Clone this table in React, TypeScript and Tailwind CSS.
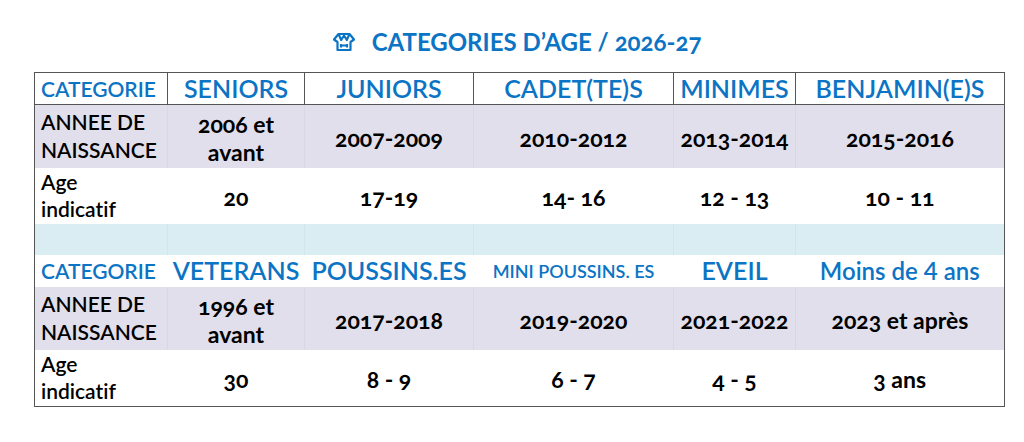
import React from "react";

const font = { fontFamily: "Lato, 'Open Sans', sans-serif" };

const widths = ["w-[133px]", "w-[137px]", "w-[169px]", "w-[200px]", "w-[122px]", "w-[209px]"];

type Block = {
  heads: { label: string; size: string }[];
  years: string[];
  ages: string[];
  bordered: boolean;
};

const blocks: Block[] = [
  {
    heads: [
      { label: "SENIORS", size: "text-[25px]" },
      { label: "JUNIORS", size: "text-[25px]" },
      { label: "CADET(TE)S", size: "text-[25px]" },
      { label: "MINIMES", size: "text-[25px]" },
      { label: "BENJAMIN(E)S", size: "text-[25px]" },
    ],
    years: ["2006 et\navant", "2007-2009", "2010-2012", "2013-2014", "2015-2016"],
    ages: ["20", "17-19", "14- 16", "12 - 13", "10 - 11"],
    bordered: true,
  },
  {
    heads: [
      { label: "VETERANS", size: "text-[25px]" },
      { label: "POUSSINS.ES", size: "text-[25px]" },
      { label: "MINI POUSSINS. ES", size: "text-[18px]" },
      { label: "EVEIL", size: "text-[25px]" },
      { label: "Moins de 4 ans", size: "text-[24px]" },
    ],
    years: ["1996 et\navant", "2017-2018", "2019-2020", "2021-2022", "2023 et après"],
    ages: ["30", "8 - 9", "6 - 7", "4 - 5", "3 ans"],
    bordered: false,
  },
];

function Logo() {
  return (
    <svg width="22" height="20" viewBox="0 0 22 20" fill="none" stroke="#0b74c4" strokeWidth="2.2" strokeLinejoin="round">
      <path d="M5.5 2 L16.5 2 L21 7.5 L17.5 10 L17.5 18 L4.5 18 L4.5 10 L1 7.5 Z" />
      <path d="M5.5 2 L8.2 8 L11 3.5 L13.8 8 L16.5 2" />
      <path d="M8 12 L8 15.5 M14 12 L14 15.5 M8 13.5 L14 13.5" />
    </svg>
  );
}

export default function App() {
  return (
    <div className="w-[1024px] h-[442px] bg-white text-black [font-variant-ligatures:none]" style={font}>
      <div className="flex items-center justify-center gap-[17px] pt-[24px] h-[60px] pl-[10px]">
        <Logo />
        <h1 className="text-[24px] font-bold text-[#0b74c4] oldstyle-nums leading-none">
          CATEGORIES D’AGE / 2026-27
        </h1>
      </div>
      <table className="ml-[34px] mt-[12px] border-collapse border-[1.5px] border-[#555] table-fixed w-[970px]">
        <colgroup>
          {widths.map((w) => (
            <col key={w} className={w} />
          ))}
        </colgroup>
        <tbody>
          {blocks.map((b, bi) => (
            <React.Fragment key={bi}>
              {bi === 1 && (
                <tr className="h-[31px] bg-[#daedf3]">
                  {widths.map((w, i) => (
                    <td key={i} className={i > 0 ? "border-l border-[#d2e5ec]" : ""} />
                  ))}
                </tr>
              )}
              <tr className="h-[32px]">
                <td
                  className={`text-[21px] font-semibold text-[#0b74c4] pl-[6px] leading-none ${
                    b.bordered ? "border-[1.5px] border-[#555]" : ""
                  }`}
                >
                  CATEGORIE
                </td>
                {b.heads.map((h) => (
                  <td
                    key={h.label}
                    className={`${h.size} font-semibold text-[#0b74c4] text-center whitespace-nowrap leading-none ${
                      b.bordered ? "border-[1.5px] border-[#555]" : ""
                    }`}
                  >
                    {h.label}
                  </td>
                ))}
              </tr>
              <tr className="h-[63px] bg-[#e2dfec]">
                <td className="text-[21px] font-semibold leading-[28px] pl-[6px] border-r border-[#dad6e6] whitespace-nowrap">
                  ANNEE DE
                  <br />
                  NAISSANCE
                </td>
                {b.years.map((y, i) => (
                  <td
                    key={i}
                    className={`text-[23px] font-bold text-center oldstyle-nums whitespace-pre-line leading-[28px] pt-[4px] ${
                      i < 4 ? "border-r border-[#dad6e6]" : ""
                    }`}
                  >
                    {y}
                  </td>
                ))}
              </tr>
              <tr className="h-[55px]">
                <td className="text-[21px] font-semibold leading-[27px] pl-[6px] pb-[2px]">
                  Age
                  <br />
                  indicatif
                </td>
                {b.ages.map((a, i) => (
                  <td key={i} className="text-[23px] font-bold text-center oldstyle-nums pt-[4px]">
                    {a}
                  </td>
                ))}
              </tr>
            </React.Fragment>
          ))}
        </tbody>
      </table>
    </div>
  );
}
